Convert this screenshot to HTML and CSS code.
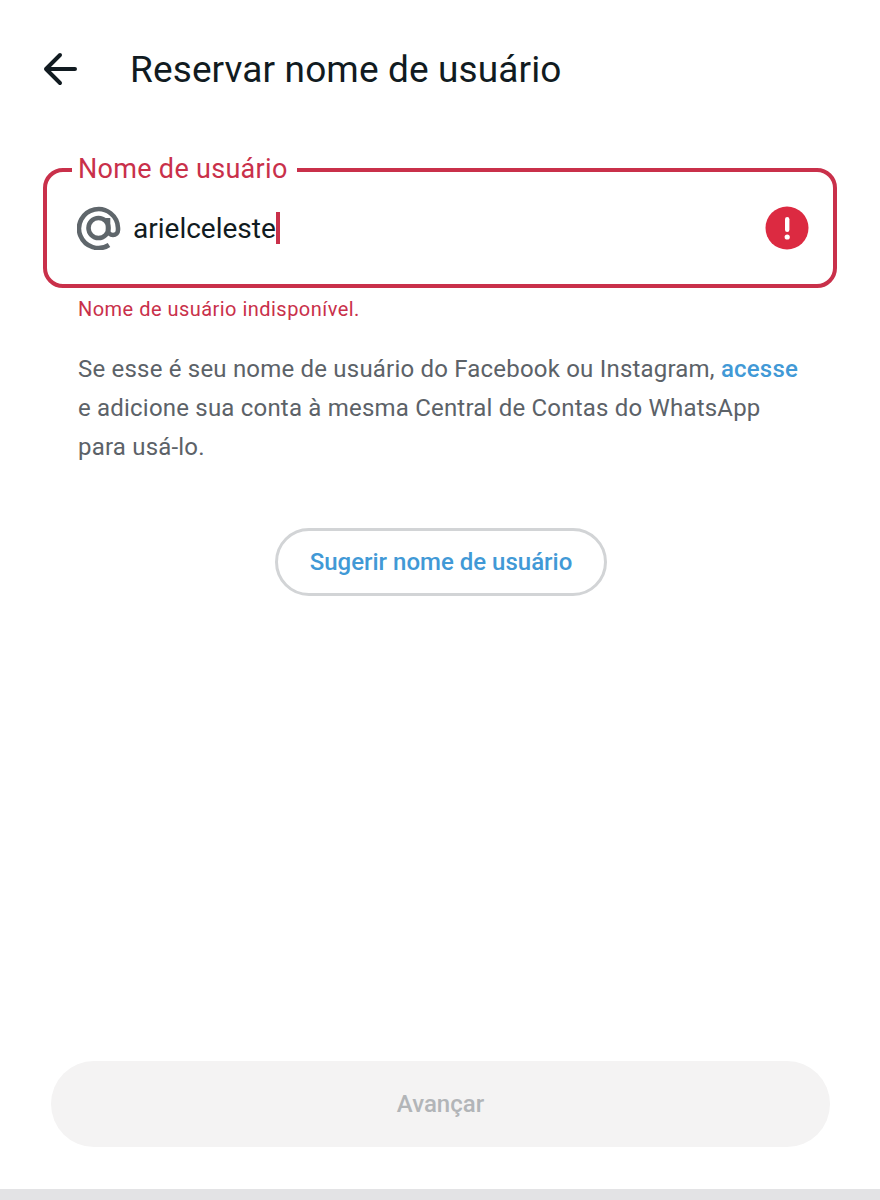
FILE: index.html
```html
<!DOCTYPE html>
<html lang="pt-BR">
<head>
  <meta charset="UTF-8" />
  <meta name="viewport" content="width=device-width, initial-scale=1.0"/>
  <title>Reservar nome de usuário</title>
  <link rel="stylesheet" href="styles.css">
</head>
<body>
  <header class="top-bar">
    <a class="back-btn" href="#" aria-label="Voltar">
      <svg width="36" height="36" viewBox="0 0 36 36" fill="none" stroke="#111b21" stroke-width="4" stroke-linecap="round" stroke-linejoin="round">
        <path d="M32 18H3M17 4L3 18l14 14"/>
      </svg>
    </a>
    <h1>Reservar nome de usuário</h1>
  </header>

  <main class="content">
    <fieldset class="username-field">
      <legend>Nome de usuário</legend>
      <div class="input-row">
        <svg class="at-icon" width="44" height="44" viewBox="0 0 44 44" fill="none" stroke="#5f666b" stroke-width="4.6">
          <circle cx="21.5" cy="22" r="10"/>
          <path d="M32 39A19.5 19.5 0 1 1 41 22v2a5 5 0 0 1-10 0V12"/>
        </svg>
        <span class="input-value">arielceleste</span>
        <span class="caret"></span>
        <svg class="error-icon" width="44" height="44" viewBox="0 0 44 44">
          <circle cx="22" cy="22" r="21.5" fill="#dc2a41"/>
          <rect x="20" y="11" width="4.4" height="15" rx="2.2" fill="#fff"/>
          <circle cx="22.2" cy="31" r="2.6" fill="#fff"/>
        </svg>
      </div>
    </fieldset>
    <p class="error-text">Nome de usuário indisponível.</p>
    <p class="help-text">Se esse é seu nome de usuário do Facebook ou Instagram, <a href="#">acesse</a> e adicione sua conta à mesma Central de Contas do WhatsApp para usá-lo.</p>
    <div class="suggest-wrap">
      <button class="suggest-btn" type="button">Sugerir nome de usuário</button>
    </div>
  </main>

  <div class="footer">
    <button class="next-btn" type="button" disabled>Avançar</button>
  </div>
  <div class="nav-strip"></div>
</body>
</html>
```

FILE: styles.css
```css
* {
  box-sizing: border-box;
}

body {
  margin: 0;
  height: 1200px;
  display: flex;
  flex-direction: column;
  background: #fff;
  color: #111b21;
  font-family: Roboto, "Liberation Sans", sans-serif;
}

.top-bar {
  display: flex;
  align-items: center;
  height: 138px;
  padding-left: 43px;
}

.back-btn {
  display: flex;
  width: 87px;
}

.top-bar h1 {
  margin: 0;
  font-size: 37px;
  font-weight: 400;
  letter-spacing: 0.12px;
}

.content {
  flex: 1;
  padding: 0 43px;
}

.username-field {
  height: 135px;
  margin: 0;
  margin-top: 15px;
  padding: 4px 24px 0 30px;
  border: 4px solid #c9304a;
  border-radius: 20px;
  min-width: 0;
}

.username-field legend {
  margin-left: -5px;
  padding: 0 9px 2px 6px;
  font-size: 27px;
  line-height: 32px;
  letter-spacing: 0.3px;
  color: #c9304a;
}

.input-row {
  display: flex;
  align-items: center;
  height: 74px;
}

.at-icon {
  margin-right: 12px;
}

.input-value {
  font-size: 28px;
}

.caret {
  width: 4px;
  height: 32px;
  background: #c9304a;
}

.error-icon {
  margin-left: auto;
}

.error-text {
  margin: 8px 0 0 35px;
  font-size: 20px;
  line-height: 26px;
  letter-spacing: 0.47px;
  color: #c9304a;
}

.help-text {
  margin: 28px 30px 0 35px;
  font-size: 24px;
  line-height: 39px;
  letter-spacing: 0.2px;
  color: #5c6268;
}

.help-text a {
  color: #4199d6;
  font-weight: 500;
  text-decoration: none;
}

.suggest-wrap {
  display: flex;
  justify-content: center;
  margin-top: 61px;
  padding-left: 2px;
}

.suggest-btn {
  width: 332px;
  height: 68px;
  background: #fff;
  border: 3px solid #d2d4d6;
  border-radius: 34px;
  font-family: inherit;
  font-size: 24px;
  font-weight: 500;
  color: #4199d6;
}

.footer {
  padding: 0 50px 42px 51px;
}

.next-btn {
  display: block;
  width: 100%;
  height: 86px;
  background: #f4f3f3;
  border: none;
  border-radius: 43px;
  font-family: inherit;
  font-size: 24px;
  font-weight: 500;
  color: #b2b5b8;
}

.nav-strip {
  height: 11px;
  background: #e3e3e5;
}
```
